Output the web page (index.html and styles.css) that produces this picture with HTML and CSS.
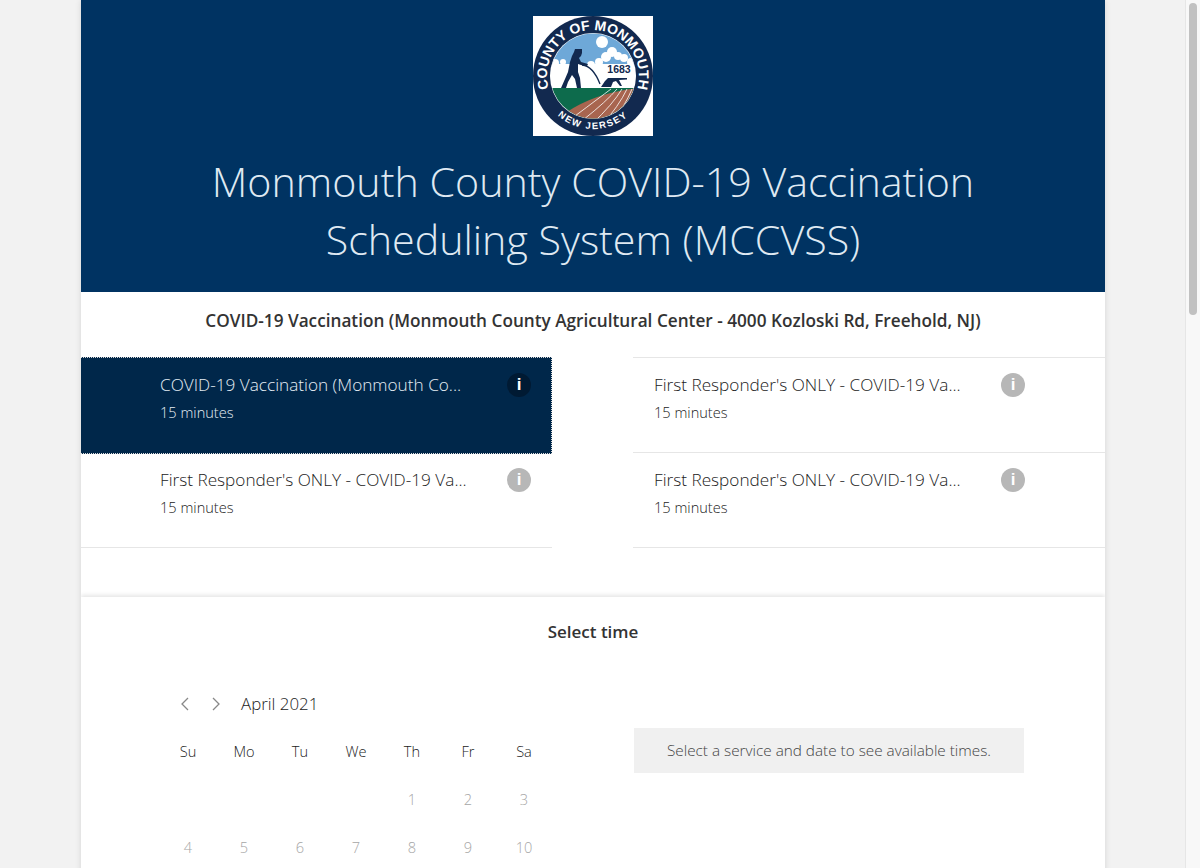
FILE: index.html
```html
<!DOCTYPE html>
<html lang="en">
<head>
    <meta charset="UTF-8">
    <meta name="viewport" content="width=device-width, initial-scale=1.0">
    <title>MCCVSS</title>
    <link rel="stylesheet" href="styles.css">
</head>
<body>
    <div class="page">
        <div class="container">
            <header class="banner">
                <svg class="logo" viewBox="0 0 120 120" role="img" aria-label="County of Monmouth seal">
                    <rect width="120" height="120" fill="#fff"/>
                    <circle cx="60" cy="60" r="60" fill="#12294f"/>
                    <circle cx="60" cy="60" r="43" fill="#fff"/>
                    <clipPath id="seal-inner"><circle cx="60" cy="60" r="42.5"/></clipPath>
                    <g clip-path="url(#seal-inner)">
                        <rect x="15" y="15" width="90" height="36" fill="#6ea8d8"/>
                        <circle cx="69" cy="26" r="6" fill="#fff"/>
                        <g fill="#fff">
                            <circle cx="22" cy="47" r="4"/>
                            <circle cx="30" cy="46" r="3"/>
                            <circle cx="58" cy="49" r="4"/>
                            <circle cx="66" cy="46" r="4"/>
                            <circle cx="73" cy="41" r="5"/>
                            <circle cx="79" cy="36" r="5"/>
                            <circle cx="85" cy="40" r="4"/>
                            <circle cx="91" cy="42" r="4"/>
                            <circle cx="98" cy="46" r="4"/>
                            <rect x="15" y="48" width="90" height="24"/>
                        </g>
                        <rect x="15" y="72" width="92" height="34" fill="#0d6b4c"/>
                        <path d="M34 96Q62 77 105 72l4 30-42 10z" fill="#a8654f"/>
                        <path d="M42 100Q66 82 78 73M50 104Q74 85 84 73M59 108Q80 88 89 73M68 110Q86 90 94 73M77 110Q92 90 99 73M87 108Q97 90 103 74" stroke="#fff" stroke-width=".8" fill="none"/>
                    </g>
                    <path d="M49 49Q60 50 67 68" stroke="#fff" stroke-width="3" fill="none"/>
                    <path d="M49 49Q60 50 67 68" stroke="#12294f" stroke-width="1.3" fill="none"/>
                    <path d="M41 33h8v4l-1 3-2 2 2 4 7 2-1 2-6-1-3-1v8l2 6 1 10h-4l-2-9-3-4-4 7-2 6h-5l4-9 3-7 2-10 2-6 2-4 1-3z" fill="#12294f"/>
                    <path d="M68 71l4-6 3-3h19v1.500l-8 .5 3 6h-2l-4-5-3 1-2 5z" fill="#12294f"/>
                    <text class="seal-year" x="86" y="56.7" text-anchor="middle">1683</text>
                    <path id="seal-top" d="M24.800 89.600A46 46 0 1 1 95.200 89.600" fill="none"/>
                    <path id="seal-bottom" d="M7.800 69.200A53 53 0 0 0 112.200 69.200" fill="none"/>
                    <text class="seal-name"><textPath href="#seal-top" startOffset="50%" text-anchor="middle">COUNTY OF MONMOUTH</textPath></text>
                    <text class="seal-state"><textPath href="#seal-bottom" startOffset="50%" text-anchor="middle">NEW JERSEY</textPath></text>
                </svg>
                <h1>Monmouth County COVID-19 Vaccination<br>Scheduling System (MCCVSS)</h1>
            </header>

            <h2 class="subtitle">COVID-19 Vaccination (Monmouth County Agricultural Center - 4000 Kozloski Rd, Freehold, NJ)</h2>

            <div class="services">
                <div class="service selected">
                    <div class="service-text">
                        <div class="service-name">COVID-19 Vaccination (Monmouth Co...</div>
                        <div class="service-time">15 minutes</div>
                    </div>
                    <span class="info">i</span>
                </div>
                <div class="service">
                    <div class="service-text">
                        <div class="service-name">First Responder's ONLY - COVID-19 Va...</div>
                        <div class="service-time">15 minutes</div>
                    </div>
                    <span class="info">i</span>
                </div>
                <div class="service">
                    <div class="service-text">
                        <div class="service-name">First Responder's ONLY - COVID-19 Va...</div>
                        <div class="service-time">15 minutes</div>
                    </div>
                    <span class="info">i</span>
                </div>
                <div class="service">
                    <div class="service-text">
                        <div class="service-name">First Responder's ONLY - COVID-19 Va...</div>
                        <div class="service-time">15 minutes</div>
                    </div>
                    <span class="info">i</span>
                </div>
            </div>

            <section class="time-panel">
                <h3>Select time</h3>
                <div class="time-body">
                    <div class="calendar">
                        <div class="month-row">
                            <svg class="arrow" viewBox="0 0 12 16"><path d="M9 2L3 8l6 6"/></svg>
                            <svg class="arrow" viewBox="0 0 12 16"><path d="M3 2l6 6-6 6"/></svg>
                            <span class="month">April 2021</span>
                        </div>
                        <div class="days">
                            <span class="weekday">Su</span>
                            <span class="weekday">Mo</span>
                            <span class="weekday">Tu</span>
                            <span class="weekday">We</span>
                            <span class="weekday">Th</span>
                            <span class="weekday">Fr</span>
                            <span class="weekday">Sa</span>
                            <span></span>
                            <span></span>
                            <span></span>
                            <span></span>
                            <span>1</span>
                            <span>2</span>
                            <span>3</span>
                            <span>4</span>
                            <span>5</span>
                            <span>6</span>
                            <span>7</span>
                            <span>8</span>
                            <span>9</span>
                            <span>10</span>
                        </div>
                    </div>
                    <div class="no-times">Select a service and date to see available times.</div>
                </div>
            </section>
        </div>
        <div class="scrollbar"><div class="thumb"></div></div>
    </div>
</body>
</html>
```

FILE: styles.css
```css
html, body {
    height: 100%;
}

body {
    margin: 0;
    overflow: hidden;
    font-family: "Open Sans", "Noto Sans", sans-serif;
    background-color: #f2f2f2;
    color: #222;
}

.page {
    display: flex;
    height: 100%;
    overflow: hidden;
    padding-left: 81px;
    box-sizing: border-box;
}

.container {
    width: 1024px;
    min-height: 1000px;
    margin-right: 80px;
    flex-shrink: 0;
    background: white;
    overflow: hidden;
    box-shadow: 0 0 6px rgba(0, 0, 0, 0.12);
}

/* Fake window scrollbar */
.scrollbar {
    width: 15px;
    flex-shrink: 0;
    background: #f8f8f8;
    border-left: 1px solid #e6e6e6;
    box-sizing: border-box;
    padding: 3px 3px 0;
}

.thumb {
    height: 312px;
    border-radius: 4px;
    background: #c1c1c1;
}

.banner {
    height: 292px;
    padding-top: 16px;
    box-sizing: border-box;
    background: #003362;
    text-align: center;
}

.logo {
    display: block;
    width: 120px;
    height: 120px;
    margin: 0 auto;
}

.seal-year {
    font: bold 10.5px "Liberation Sans", sans-serif;
    fill: #12294f;
}

.seal-name {
    font: bold 14px "Liberation Sans", sans-serif;
    fill: #fff;
}

.seal-state {
    font: bold 9.5px "Liberation Sans", sans-serif;
    letter-spacing: 1.5px;
    fill: #fff;
}

.banner h1 {
    margin: 16px 0 0;
    font-size: 41.2px;
    font-weight: 300;
    line-height: 58px;
    color: #dfe9f2;
}

.subtitle {
    margin: 0;
    height: 65px;
    padding-top: 17px;
    box-sizing: border-box;
    font-size: 17.2px;
    font-weight: 600;
    line-height: 24px;
    text-align: center;
    color: #333;
}

.services {
    display: grid;
    grid-template-columns: 471px 472px;
    column-gap: 81px;
    grid-template-rows: 96px 95px;
    height: 240px;
}

.service {
    display: flex;
    align-items: flex-start;
    padding: 15px 0 0 79px;
    box-sizing: border-box;
    border-bottom: 1px solid #e6e6e6;
}

.service:nth-child(even) {
    padding-left: 21px;
}

.service:nth-child(2) {
    border-top: 1px solid #e6e6e6;
}

.service.selected {
    height: 97px;
    background: #00274a;
    color: #e4edf4;
    border-top: 1px dotted #ddd;
    border-right: 1px dotted #ddd;
    border-bottom: 1px dotted #ddd;
}

.service-text {
    width: 347px;
    flex-shrink: 0;
}

.service-name {
    white-space: nowrap;
    font-size: 17.2px;
    font-weight: 300;
    line-height: 24px;
}

.service-time {
    margin-top: 5px;
    font-size: 14.6px;
    font-weight: 300;
    line-height: 20px;
}

.info {
    width: 24px;
    height: 24px;
    flex-shrink: 0;
    border-radius: 50%;
    background: #b7b7b7;
    color: white;
    font: bold 17px/23px "Liberation Sans", sans-serif;
    text-align: center;
}

.selected .info {
    background: #001a33;
}

.time-panel {
    box-shadow: 0 -2px 4px rgba(0, 0, 0, 0.1);
}

.time-panel h3 {
    margin: 0;
    padding-top: 23px;
    font-size: 17px;
    font-weight: 600;
    line-height: 24px;
    text-align: center;
    color: #333;
}

.time-body {
    display: flex;
    padding: 48px 0 0 79px;
}

.calendar {
    width: 392px;
}

.month-row {
    display: flex;
    align-items: center;
    height: 24px;
    margin-bottom: 11px;
    padding-left: 19px;
}

.arrow {
    width: 12px;
    height: 16px;
    margin-right: 19px;
}

.arrow path {
    fill: none;
    stroke: #888;
    stroke-width: 1.3;
}

.month {
    font-size: 16.9px;
    font-weight: 300;
    line-height: 24px;
}

.days {
    display: grid;
    grid-template-columns: repeat(7, 56px);
    grid-auto-rows: 48px;
    text-align: center;
    font-size: 14.6px;
    font-weight: 300;
    line-height: 48px;
    color: #a6a6a6;
}

.weekday {
    color: #222;
    line-height: 24px;
    padding-top: 12px;
    height: 36px;
}

.no-times {
    width: 390px;
    height: 45px;
    margin: 36px 0 0 82px;
    background: #f0f0f0;
    font-size: 15.3px;
    font-weight: 300;
    line-height: 45px;
    text-align: center;
    color: #444;
}
```
